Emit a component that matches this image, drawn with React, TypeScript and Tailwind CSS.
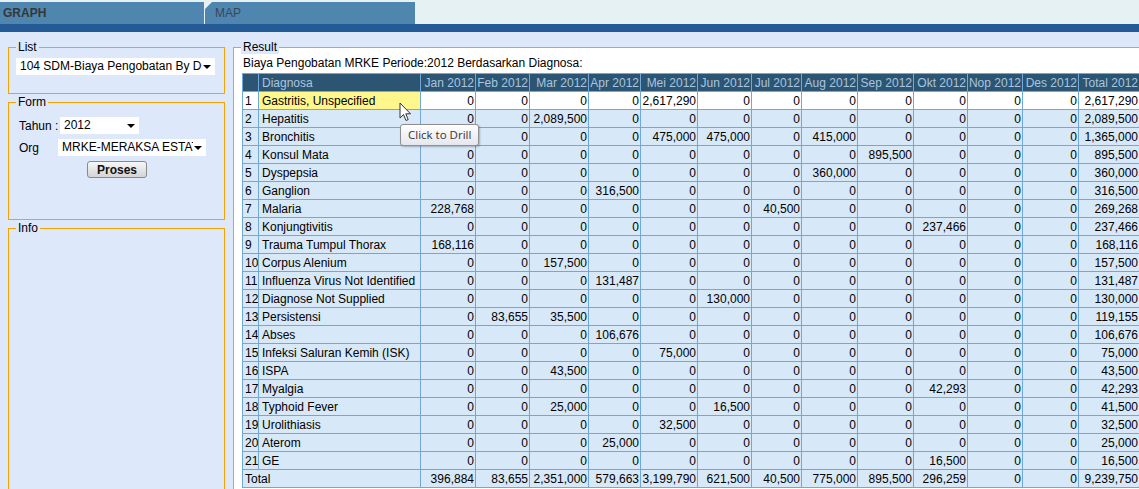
import React from "react";

const months = ["Jan", "Feb", "Mar", "Apr", "Mei", "Jun", "Jul", "Aug", "Sep", "Okt", "Nop", "Des"];
const colW = [16, 162, 55, 54, 59, 52, 57, 54, 50, 56, 56, 54, 55, 56, 61];

type Row = [string, string[]];

const rows: Row[] = [
  ["Gastritis, Unspecified", ["0", "0", "0", "0", "2,617,290", "0", "0", "0", "0", "0", "0", "0", "2,617,290"]],
  ["Hepatitis", ["0", "0", "2,089,500", "0", "0", "0", "0", "0", "0", "0", "0", "0", "2,089,500"]],
  ["Bronchitis", ["0", "0", "0", "0", "475,000", "475,000", "0", "415,000", "0", "0", "0", "0", "1,365,000"]],
  ["Konsul Mata", ["0", "0", "0", "0", "0", "0", "0", "0", "895,500", "0", "0", "0", "895,500"]],
  ["Dyspepsia", ["0", "0", "0", "0", "0", "0", "0", "360,000", "0", "0", "0", "0", "360,000"]],
  ["Ganglion", ["0", "0", "0", "316,500", "0", "0", "0", "0", "0", "0", "0", "0", "316,500"]],
  ["Malaria", ["228,768", "0", "0", "0", "0", "0", "40,500", "0", "0", "0", "0", "0", "269,268"]],
  ["Konjungtivitis", ["0", "0", "0", "0", "0", "0", "0", "0", "0", "237,466", "0", "0", "237,466"]],
  ["Trauma Tumpul Thorax", ["168,116", "0", "0", "0", "0", "0", "0", "0", "0", "0", "0", "0", "168,116"]],
  ["Corpus Alenium", ["0", "0", "157,500", "0", "0", "0", "0", "0", "0", "0", "0", "0", "157,500"]],
  ["Influenza Virus Not Identified", ["0", "0", "0", "131,487", "0", "0", "0", "0", "0", "0", "0", "0", "131,487"]],
  ["Diagnose Not Supplied", ["0", "0", "0", "0", "0", "130,000", "0", "0", "0", "0", "0", "0", "130,000"]],
  ["Persistensi", ["0", "83,655", "35,500", "0", "0", "0", "0", "0", "0", "0", "0", "0", "119,155"]],
  ["Abses", ["0", "0", "0", "106,676", "0", "0", "0", "0", "0", "0", "0", "0", "106,676"]],
  ["Infeksi Saluran Kemih (ISK)", ["0", "0", "0", "0", "75,000", "0", "0", "0", "0", "0", "0", "0", "75,000"]],
  ["ISPA", ["0", "0", "43,500", "0", "0", "0", "0", "0", "0", "0", "0", "0", "43,500"]],
  ["Myalgia", ["0", "0", "0", "0", "0", "0", "0", "0", "0", "42,293", "0", "0", "42,293"]],
  ["Typhoid Fever", ["0", "0", "25,000", "0", "0", "16,500", "0", "0", "0", "0", "0", "0", "41,500"]],
  ["Urolithiasis", ["0", "0", "0", "0", "32,500", "0", "0", "0", "0", "0", "0", "0", "32,500"]],
  ["Aterom", ["0", "0", "0", "25,000", "0", "0", "0", "0", "0", "0", "0", "0", "25,000"]],
  ["GE", ["0", "0", "0", "0", "0", "0", "0", "0", "0", "16,500", "0", "0", "16,500"]],
];

const totals = ["396,884", "83,655", "2,351,000", "579,663", "3,199,790", "621,500", "40,500", "775,000", "895,500", "296,259", "0", "0", "9,239,750"];

const cell = "border border-[#72a8d5] h-[18px] leading-[16px] py-0 whitespace-nowrap overflow-hidden";

function SelectBox({ text, className }: { text: string; className: string }) {
  return (
    <div className={`flex items-center bg-white h-[17px] pl-[4px] pr-[4px] gap-[1px] ${className}`}>
      <span className="flex-1 min-w-0 overflow-hidden whitespace-nowrap leading-[17px]">{text}</span>
      <span className="w-0 h-0 shrink-0 border-l-[4px] border-r-[4px] border-t-[4px] border-l-transparent border-r-transparent border-t-black" />
    </div>
  );
}

export default function App() {
  return (
    <div className="relative w-[1139px] h-[489px] overflow-hidden bg-[#dde9fa] text-[12px] text-black" style={{ fontFamily: '"Liberation Sans", Arial, sans-serif' }}>
      {/* tabs */}
      <div className="flex items-end h-[24px] bg-[#e5f1f2]">
        <div className="w-[204px] h-[22px] bg-[#4e86b0] pl-[3px] leading-[22px] text-[12px] font-bold text-[#363636]">GRAPH</div>
        <div className="w-[1px] h-[22px] bg-[#e5f1f2]" />
        <div className="relative w-[210px] h-[22px] bg-[#4e86b0] pl-[10px] leading-[22px] text-[12px] text-[#3a4656]">
          <span className="absolute left-0 top-0 w-0 h-0 border-t-[7px] border-r-[7px] border-t-[#e5f1f2] border-r-transparent" />
          MAP
        </div>
      </div>
      <div className="h-[8px] bg-[#245b96]" />

      <div className="flex pt-[8px]">
        {/* left column */}
        <div className="ml-[8px] w-[217px] shrink-0 flex flex-col gap-[1px]">
          <fieldset className="border border-[#f4a300] h-[54px]">
            <legend className="ml-[7px] px-[2px] leading-[14px] text-[12px]">List</legend>
            <SelectBox text="104 SDM-Biaya Pengobatan By Diagnosa" className="ml-[7px] mt-[4px] w-[199px]" />
          </fieldset>
          <fieldset className="border border-[#f4a300] h-[125px]">
            <legend className="ml-[7px] px-[2px] leading-[14px] text-[12px]">Form</legend>
            <div className="flex items-center mt-[8px] ml-[10px] h-[17px]">
              <span className="w-[41px]">Tahun :</span>
              <SelectBox text="2012" className="w-[79px]" />
            </div>
            <div className="flex items-center mt-[5px] ml-[10px] h-[17px]">
              <span className="w-[39px]">Org</span>
              <SelectBox text="MRKE-MERAKSA ESTATE" className="w-[148px]" />
            </div>
            <div className="flex ml-[78px] mt-[5px]">
              <button className="w-[60px] h-[17px] rounded-[3px] border border-[#8a8a8a] bg-gradient-to-b from-[#f7f7f7] to-[#d4d4d4] text-[12px] font-bold leading-[14px] text-[#111]">Proses</button>
            </div>
          </fieldset>
          <fieldset className="border border-[#f4a300] h-[300px]">
            <legend className="ml-[7px] px-[2px] leading-[14px] text-[12px]">Info</legend>
          </fieldset>
        </div>

        {/* result */}
        <fieldset className="ml-[8px] w-[930px] shrink-0 h-[460px] border border-[#f4a300] bg-white">
          <legend className="ml-[7px] px-[2px] leading-[14px] text-[12px] bg-[#dde9fa]">Result</legend>
          <div className="ml-[9px] mt-[2px] leading-[15px]">Biaya Pengobatan MRKE Periode:2012 Berdasarkan Diagnosa:</div>
          <table className="ml-[8px] mt-[2px] border-collapse table-fixed w-[897px]">
            <colgroup>
              {colW.map((w, i) => (
                <col key={i} style={{ width: w }} />
              ))}
            </colgroup>
            <thead>
              <tr className="bg-[#2c5573] text-[#a9c5df]">
                <th className={`${cell} font-normal`} />
                <th className={`${cell} font-normal text-left pl-[3px]`}>Diagnosa</th>
                {months.map((m) => (
                  <th key={m} className={`${cell} font-normal text-right pr-[1px]`}>{m} 2012</th>
                ))}
                <th className={`${cell} font-normal text-right pr-[1px]`}>Total 2012</th>
              </tr>
            </thead>
            <tbody>
              {rows.map(([name, vals], i) => (
                <tr key={name} className={i === 0 ? "bg-white" : "bg-[#d7e8f8]"}>
                  <td className={`${cell} pl-[2px]`}>{i + 1}</td>
                  <td className={`${cell} pl-[3px] ${i === 0 ? "bg-[#fff68c]" : ""}`}>{name}</td>
                  {vals.map((v, j) => (
                    <td key={j} className={`${cell} text-right pr-[1px]`}>{v}</td>
                  ))}
                </tr>
              ))}
              <tr className="bg-[#d7e8f8]">
                <td colSpan={2} className={`${cell} pl-[2px]`}>Total</td>
                {totals.map((v, j) => (
                  <td key={j} className={`${cell} text-right pr-[1px]`}>{v}</td>
                ))}
              </tr>
            </tbody>
          </table>
        </fieldset>
      </div>

      {/* cursor */}
      <svg className="absolute left-[399px] top-[102px]" width="13" height="20" viewBox="0 0 13 20">
        <path d="M1 1 L1 16 L4.5 12.5 L7 18.5 L9.2 17.6 L6.8 11.8 L11.5 11.8 Z" fill="white" stroke="#333" strokeWidth="1" strokeLinejoin="round" />
      </svg>

      {/* tooltip */}
      <div className="absolute left-[400px] top-[124px] h-[22px] px-[7px] leading-[20px] rounded-[3px] border border-[#8f8f8f] bg-gradient-to-b from-white to-[#e6e6ee] text-[11.5px] text-[#333] shadow-[1px_1px_2px_rgba(0,0,0,0.25)]" style={{ fontFamily: '"Open Sans", "Noto Sans", sans-serif' }}>
        Click to Drill
      </div>
    </div>
  );
}
